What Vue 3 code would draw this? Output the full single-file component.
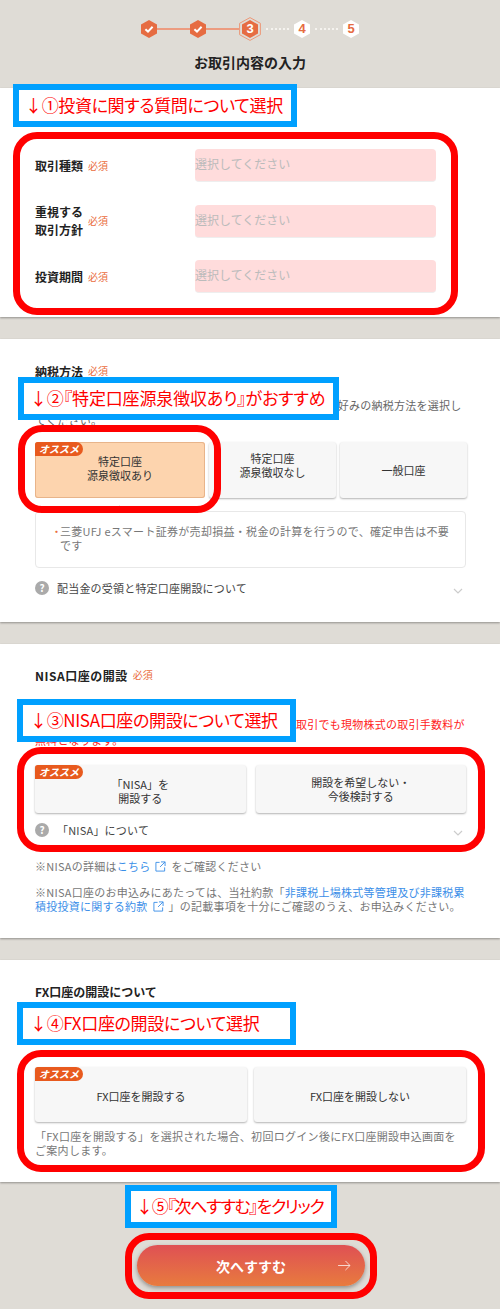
<script setup>
const steps = [
  { kind: 'done' },
  { kind: 'done' },
  { kind: 'current', label: '3' },
  { kind: 'todo', label: '4' },
  { kind: 'todo', label: '5' },
]
const fields = [
  { label: ['取引種類'] },
  { label: ['重視する', '取引方針'] },
  { label: ['投資期間'] },
]
</script>

<template>
  <div class="page">
    <header class="head">
      <div class="stepper">
        <template v-for="(s, i) in steps" :key="i">
          <svg v-if="s.kind === 'done'" class="hex" viewBox="0 0 16 18">
            <polygon class="fill" points="8,0 16,4.5 16,13.5 8,18 0,13.5 0,4.5" />
            <polyline class="tick" points="4.4,9.2 7,11.6 11.6,6.8" />
          </svg>
          <svg v-else-if="s.kind === 'current'" class="hex big" viewBox="0 0 22 24">
            <polygon class="ring" points="11,.6 21.4,6.3 21.4,17.7 11,23.4 .6,17.7 .6,6.3" />
            <polygon class="fill" points="11,3 19,7.5 19,16.5 11,21 3,16.5 3,7.5" />
            <text class="num white" x="11" y="16.4">{{ s.label }}</text>
          </svg>
          <svg v-else class="hex" viewBox="0 0 16 18">
            <polygon class="blank" points="8,0 16,4.5 16,13.5 8,18 0,13.5 0,4.5" />
            <text class="num orange" x="8" y="13.4">{{ s.label }}</text>
          </svg>
          <span v-if="i < 4" class="link" :class="i < 2 ? 'solid' : 'dotted'"></span>
        </template>
      </div>
      <h1 class="title">お取引内容の入力</h1>
    </header>

    <section class="card card-1">
      <div v-for="f in fields" :key="f.label[0]" class="field">
        <div class="field-label">
          <span class="label-text"><span v-for="l in f.label" :key="l" class="line">{{ l }}</span></span>
          <span class="req">必須</span>
        </div>
        <div class="select">選択してください</div>
      </div>
      <div class="note-box nb-1">↓①投資に関する質問について選択</div>
      <div class="ring-mark rm-1"></div>
    </section>

    <section class="card card-2">
      <div class="heading"><span class="heading-text">納税方法</span><span class="req">必須</span></div>
      <p class="desc">確定申告の有無など、ご自身のご状況やご希望に合わせてお好みの納税方法を選択してください。</p>
      <div class="choices tax">
        <button class="choice picked"><span class="badge">オススメ</span>特定口座<br />源泉徴収あり</button>
        <button class="choice raised">特定口座<br />源泉徴収なし</button>
        <button class="choice">一般口座</button>
      </div>
      <div class="explain">
        <span class="tip"></span>
        <span class="dot">・</span><span>三菱UFJ eスマート証券が売却損益・税金の計算を行うので、確定申告は不要です</span>
      </div>
      <div class="accordion acc-2">
        <span class="qmark">?</span>
        <span class="acc-text">配当金の受領と特定口座開設について</span>
        <svg class="chev" viewBox="0 0 10 6"><polyline points="1,1 5,5 9,1" /></svg>
      </div>
      <div class="note-box nb-2">↓②『特定口座源泉徴収あり』がおすすめ</div>
      <div class="ring-mark rm-2"></div>
    </section>

    <section class="card card-3">
      <div class="heading"><span class="heading-text wide">NISA口座の開設</span><span class="req">必須</span></div>
      <p class="desc red">NISA口座を開設いただくと、今後はいつでもどのお取引でも現物株式の取引手数料が無料となります。</p>
      <div class="choices two nisa">
        <button class="choice shift"><span class="badge">オススメ</span>「NISA」を<br />開設する</button>
        <button class="choice">開設を希望しない・<br />今後検討する</button>
      </div>
      <div class="accordion acc-3">
        <span class="qmark">?</span>
        <span class="acc-text">「NISA」について</span>
        <svg class="chev" viewBox="0 0 10 6"><polyline points="1,1 5,5 9,1" /></svg>
      </div>
      <p class="fine first">※NISAの詳細は<a class="anchor">こちら<svg class="ext" viewBox="0 0 12 12"><path d="M5 1.5H1v9.5h9.5V7M6.5 1h4.5v4.5M11 1 5.5 6.5" /></svg></a>をご確認ください</p>
      <p class="fine second">※NISA口座のお申込みにあたっては、当社約款「<a class="anchor">非課税上場株式等管理及び非課税累積投投資に関する約款<svg class="ext" viewBox="0 0 12 12"><path d="M5 1.5H1v9.5h9.5V7M6.5 1h4.5v4.5M11 1 5.5 6.5" /></svg></a>」の記載事項を十分にご確認のうえ、お申込みください。</p>
      <div class="note-box nb-3">↓③NISA口座の開設について選択</div>
      <div class="ring-mark rm-3"></div>
    </section>

    <section class="card card-4">
      <div class="heading"><span class="heading-text">FX口座の開設について</span></div>
      <p class="desc fx">FX取引を行うにはFX口座の開設が必要です。</p>
      <div class="choices two fxrow">
        <button class="choice low"><span class="badge">オススメ</span>FX口座を開設する</button>
        <button class="choice low">FX口座を開設しない</button>
      </div>
      <p class="fx-note">「FX口座を開設する」を選択された場合、初回ログイン後にFX口座開設申込画面をご案内します。</p>
      <div class="note-box nb-4">↓④FX口座の開設について選択</div>
      <div class="ring-mark rm-4"></div>
    </section>

    <footer class="foot">
      <button class="next">
        <span>次へすすむ</span>
        <svg class="arrow" viewBox="0 0 14 12"><path d="M0 6h13M8 1l5 5-5 5" /></svg>
      </button>
      <div class="note-box nb-5">↓⑤『次へすすむ』をクリック</div>
      <div class="ring-mark rm-5"></div>
    </footer>
  </div>
</template>

<style>
html, body { margin: 0; padding: 0; background: #dfdcd6; }
</style>

<style scoped>
.page {
  width: 500px;
  height: 1309px;
  overflow: hidden;
  background: #dfdcd6;
  font-family: "Noto Sans CJK JP", "Noto Sans", sans-serif;
  color: #333;
  font-size: 11px;
}
.head { height: 88px; box-sizing: border-box; padding-top: 20px; }
.stepper { display: flex; justify-content: center; align-items: center; height: 18px; }
.hex { width: 16px; height: 18px; flex: none; }
.hex.big { width: 22px; height: 24px; margin: -3px 0; }
.fill { fill: #e66c42; }
.blank { fill: #fff; }
.ring { fill: none; stroke: #ec9878; stroke-width: 1; }
.tick { fill: none; stroke: #fff; stroke-width: 2; }
.num { font-family: "Liberation Sans", sans-serif; font-weight: 700; font-size: 13px; text-anchor: middle; }
.num.white { fill: #fff; }
.num.orange { fill: #e66c42; }
.link { flex: none; display: block; }
.link.solid { width: 33px; height: 2px; background: #ec9c80; }
.link.dotted { width: 23px; margin: 0 5px; border-top: 2px dotted #f5f3ef; }
.title { margin: 14px 0 0; text-align: center; font-size: 14px; line-height: 20px; font-weight: 700; color: #222; }

.card {
  position: relative;
  background: #fff;
  box-shadow: 0 1px 2px rgba(0, 0, 0, .35);
  padding: 0 34px 0 35px;
  box-sizing: border-box;
}
.card-1 { height: 229px; padding-top: 61px; display: flex; flex-direction: column; gap: 22.5px; }
.card-2 { height: 283px; margin-top: 22px; padding-top: 24px; }
.card-3 { height: 294px; margin-top: 22px; padding-top: 23px; }
.card-4 { height: 222px; margin-top: 22px; padding-top: 23px; }

.field { display: grid; grid-template-columns: 160px 241px; grid-template-rows: 33px; align-items: center; height: 33px; }
.field-label { display: flex; align-items: center; gap: 5px; }
.label-text { font-size: 12px; font-weight: 700; color: #222; line-height: 18px; }
.line { display: block; }
.req { color: #ea6d3d; font-size: 10px; line-height: 14px; }
.select {
  height: 33px;
  line-height: 30px;
  background: #ffdcdc;
  border-radius: 4px;
  border-bottom: 1px solid #eee;
  box-sizing: border-box;
  color: #bbb;
  font-size: 12px;
}
.heading { display: flex; align-items: center; gap: 5px; height: 16px; }
.heading-text { font-size: 12px; font-weight: 700; color: #222; }
.heading-text.wide { letter-spacing: .5px; }
.desc { margin: 19px 0 0; font-size: 11px; line-height: 15px; color: #666; letter-spacing: .25px; }
.desc.red { margin-top: 33px; color: #f22; line-height: 16px; }
.desc.fx { margin: 32px 0 0; }

.choices { display: grid; }
.tax { grid-template-columns: 170px 127px 127px; gap: 4px; margin-top: 14px; height: 56px; }
.two { grid-template-columns: 1fr 1fr; }
.nisa { gap: 10px; margin-top: 17px; height: 48px; }
.fxrow { gap: 7px; margin-top: 21px; height: 55px; }
.choice {
  position: relative;
  border: 0;
  padding: 0;
  font: inherit;
  font-size: 11px;
  line-height: 14px;
  color: #333;
  background: #f7f7f7;
  border-radius: 3px;
  box-shadow: 0 1px 2px rgba(0, 0, 0, .3);
}
.choice.picked { background: #fdd4ae; box-shadow: inset 0 0 0 1px #e8b48a; padding-bottom: 4px; }
.choice.raised { padding-bottom: 10px; }
.choice.shift { padding-top: 4px; }
.choice.low { padding-top: 2px; }
.badge {
  position: absolute;
  left: 0;
  top: 0;
  width: 48px;
  height: 14px;
  line-height: 14px;
  text-align: center;
  background: #e85a1e;
  color: #fff;
  font-size: 10px;
  font-weight: 700;
  font-style: italic;
  border-radius: 3px 8px 8px 0;
}
.explain {
  position: relative;
  display: flex;
  margin-top: 13px;
  height: 57px;
  box-sizing: border-box;
  padding: 12px 15px 0 16px;
  border: 1px solid #e8e8e8;
  border-radius: 4px;
  line-height: 14px;
  color: #777;
  font-size: 11px;
  letter-spacing: .3px;
}
.dot { color: #ea6d3d; width: 9px; margin-left: -1px; flex: none; }
.tip {
  position: absolute;
  left: 79px;
  top: -5px;
  width: 8px;
  height: 8px;
  background: #fff;
  border-left: 1px solid #e8e8e8;
  border-top: 1px solid #e8e8e8;
  transform: rotate(45deg);
}
.accordion { position: relative; display: flex; align-items: center; height: 16px; }
.acc-2 { margin-top: 12px; }
.acc-3 { margin-top: 9px; }
.qmark {
  width: 14px;
  height: 14px;
  border-radius: 50%;
  background: #aaa;
  color: #fff;
  font-size: 10px;
  font-weight: 700;
  line-height: 14px;
  text-align: center;
  flex: none;
}
.acc-text { margin-left: 8px; color: #444; line-height: 16px; letter-spacing: .2px; }
.chev { position: absolute; right: 3px; top: 8px; width: 10px; height: 6px; fill: none; stroke: #ccc; stroke-width: 1.2; }
.fine { margin: 0; line-height: 14px; color: #777; font-size: 11px; letter-spacing: .25px; }
.fine.first { margin-top: 21px; }
.fine.second { margin-top: 12px; }
.anchor { color: #3a8ee8; }
.ext { width: 11px; height: 11px; margin: 0 5px; vertical-align: -1px; fill: none; stroke: #3a8ee8; stroke-width: 1; }
.fx-note { margin: 7px 0 0; line-height: 14px; color: #777; letter-spacing: .3px; }

.foot { position: relative; padding: 63px 0 0 137px; }
.next {
  position: relative;
  display: block;
  width: 228px;
  height: 41px;
  border: 0;
  border-radius: 21px;
  padding: 0;
  background: linear-gradient(#df5054, #e87b3e);
  color: #fff;
  font: inherit;
  font-size: 14px;
  font-weight: 700;
  box-shadow: 0 2px 4px rgba(0, 0, 0, .35);
}
.arrow { position: absolute; right: 14px; top: 15px; width: 13px; height: 11px; fill: none; stroke: #fff; stroke-width: 1; opacity: .8; }

.note-box {
  position: absolute;
  box-sizing: border-box;
  height: 43px;
  border: 6px solid #00a0ff;
  background: #fff;
  color: #f00;
  line-height: 29px;
  white-space: nowrap;
  font-size: 17px;
  letter-spacing: -.35px;
  font-feature-settings: "palt";
}
.ring-mark {
  position: absolute;
  box-sizing: border-box;
  border: 7px solid #f00;
  border-radius: 24px;
  pointer-events: none;
}
.nb-1 { left: 13px; top: -4px; width: 284px; padding-left: 6px; }
.nb-2 { left: 18px; top: 38px; width: 321px; padding-left: 6px; letter-spacing: -.15px; }
.nb-3 { left: 17px; top: 55px; width: 279px; padding-left: 7px; }
.nb-4 { left: 17px; top: 42px; width: 279px; padding-left: 7px; }
.nb-5 { left: 125px; top: 3px; width: 212px; padding-left: 5px; letter-spacing: -1.3px; }
.rm-1 { left: 13px; top: 44px; width: 445px; height: 183px; }
.rm-2 { left: 18px; top: 86px; width: 203px; height: 88px; }
.rm-3 { left: 17px; top: 103px; width: 468px; height: 105px; }
.rm-4 { left: 17px; top: 90px; width: 468px; height: 122px; }
.rm-5 { left: 125px; top: 51px; width: 252px; height: 66px; }
</style>
